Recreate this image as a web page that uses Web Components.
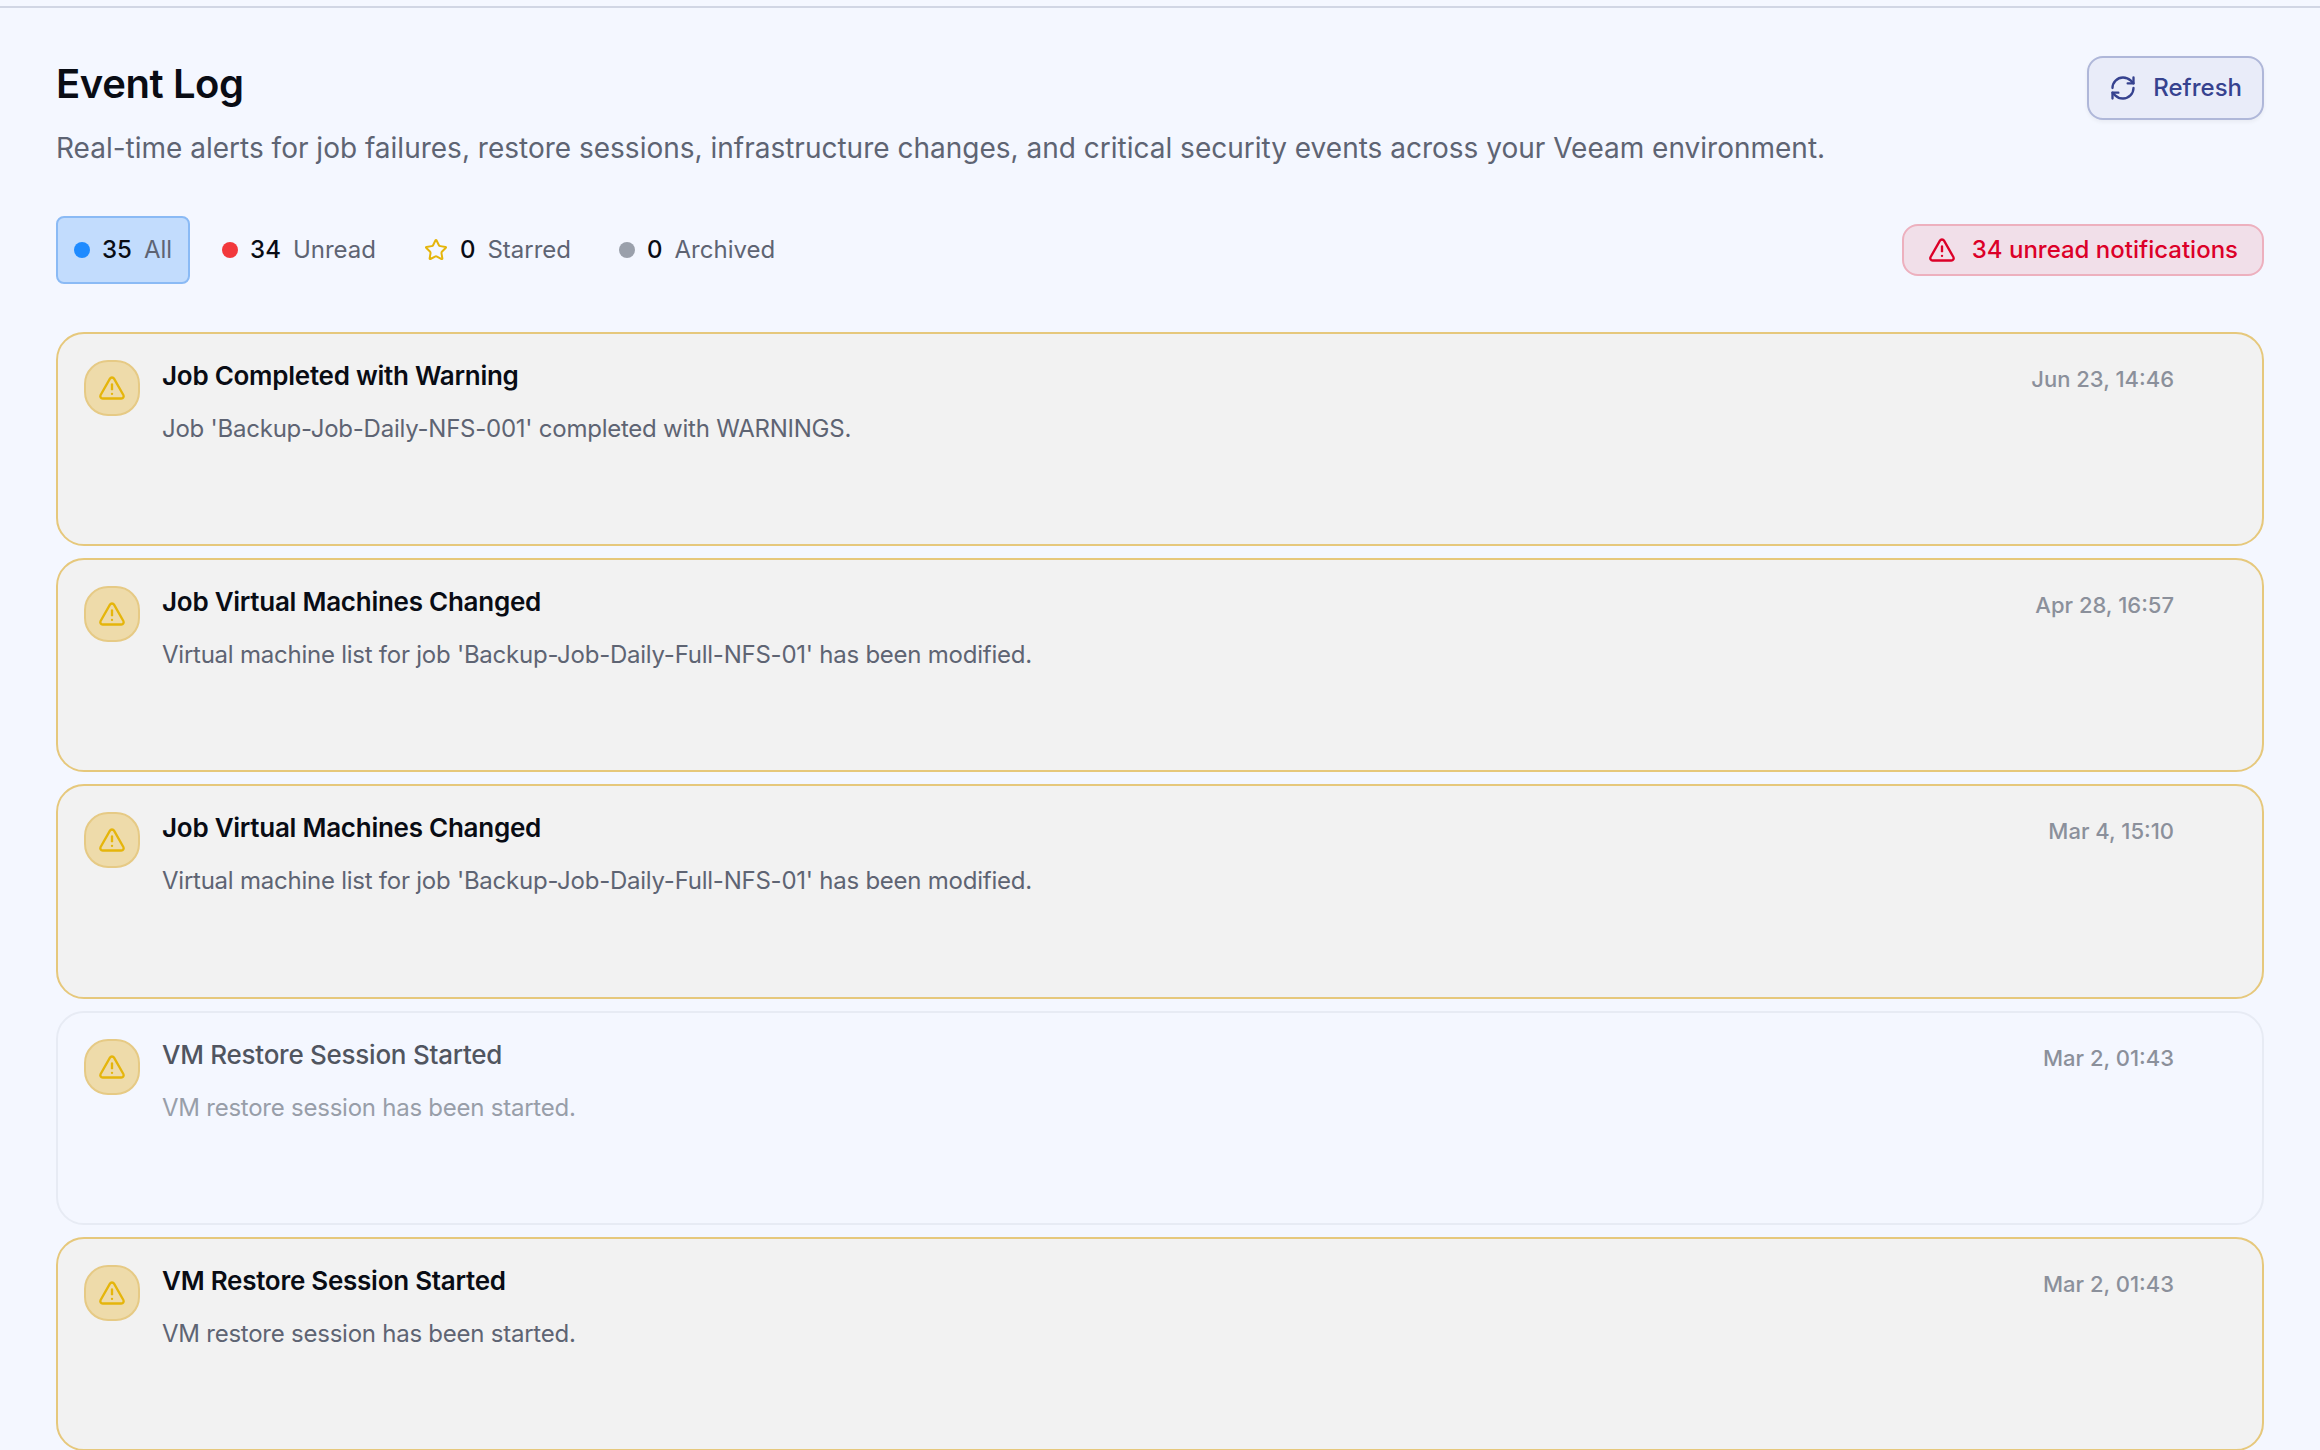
<!DOCTYPE html>
<html lang="en">
<head>
<meta charset="utf-8">
<title>Event Log</title>
<style>
html {
  background: #f4f7ff;
}

body {
  margin: 0;
  height: 1450px;
  overflow: hidden;
  font-family: Inter, "Liberation Sans", sans-serif;
  color: #090c14;
}
</style>
</head>
<body>

<event-log>
  <span slot="title">Event Log</span>
  <span slot="subtitle">Real-time alerts for job failures, restore sessions, infrastructure changes, and critical security events across your Veeam environment.</span>
  <refresh-button slot="action">Refresh</refresh-button>

  <filter-chip slot="filters" count="35" color="#1f8bff" active>All</filter-chip>
  <filter-chip slot="filters" count="34" color="#f2383c">Unread</filter-chip>
  <filter-chip slot="filters" count="0" icon="star" color="#e5b50b">Starred</filter-chip>
  <filter-chip slot="filters" count="0" color="#9aa0ab">Archived</filter-chip>
  <unread-badge slot="status">34 unread notifications</unread-badge>

  <event-card time="Jun 23, 14:46" unread>
    <span slot="title">Job Completed with Warning</span>
    Job 'Backup-Job-Daily-NFS-001' completed with WARNINGS.
  </event-card>
  <event-card time="Apr 28, 16:57" unread>
    <span slot="title">Job Virtual Machines Changed</span>
    Virtual machine list for job 'Backup-Job-Daily-Full-NFS-01' has been modified.
  </event-card>
  <event-card time="Mar 4, 15:10" unread>
    <span slot="title">Job Virtual Machines Changed</span>
    Virtual machine list for job 'Backup-Job-Daily-Full-NFS-01' has been modified.
  </event-card>
  <event-card time="Mar 2, 01:43">
    <span slot="title">VM Restore Session Started</span>
    VM restore session has been started.
  </event-card>
  <event-card time="Mar 2, 01:43" unread>
    <span slot="title">VM Restore Session Started</span>
    VM restore session has been started.
  </event-card>
</event-log>

<script>
const ICONS = {
  refresh: `
    <path d="M3 12a9 9 0 0 1 9-9 9.75 9.75 0 0 1 6.74 2.74L21 8" />
    <path d="M21 3v5h-5" />
    <path d="M21 12a9 9 0 0 1-9 9 9.75 9.75 0 0 1-6.74-2.74L3 16" />
    <path d="M8 16H3v5" />`,
  warning: `
    <path d="m21.73 18-8-14a2 2 0 0 0-3.48 0l-8 14A2 2 0 0 0 4 21h16a2 2 0 0 0 1.73-3" />
    <path d="M12 9v4" />
    <path d="M12 17h.01" />`,
  star: `
    <path d="M11.525 2.295a.53.53 0 0 1 .95 0l2.31 4.679a2.123 2.123 0 0 0 1.595 1.16l5.166.756a.53.53 0 0 1 .294.904l-3.736 3.638a2.123 2.123 0 0 0-.611 1.878l.882 5.14a.53.53 0 0 1-.771.56l-4.618-2.428a2.122 2.122 0 0 0-1.973 0L6.396 21.01a.53.53 0 0 1-.77-.56l.881-5.139a2.122 2.122 0 0 0-.611-1.879L2.16 9.795a.53.53 0 0 1 .294-.906l5.165-.755a2.122 2.122 0 0 0 1.597-1.16z" />`
};

class LineIcon extends HTMLElement {
  constructor() {
    super();
    var root = this.attachShadow({ mode: "open" });
    root.innerHTML = `
<style>
:host {
  display: block;
  flex: none;
  width: 28px;
  height: 28px;
}

svg {
  display: block;
  width: 100%;
  height: 100%;
  fill: none;
  stroke: currentColor;
  stroke-width: 2;
  stroke-linecap: round;
  stroke-linejoin: round;
}
</style>
<svg viewBox="0 0 24 24">${ICONS[this.getAttribute("name")]}</svg>
`;
  }
}

class RefreshButton extends HTMLElement {
  constructor() {
    super();
    var root = this.attachShadow({ mode: "open" });
    root.innerHTML = `
<style>
:host {
  display: block;
  flex: none;
}

button {
  display: flex;
  align-items: center;
  gap: 16px;
  box-sizing: border-box;
  height: 64px;
  padding: 0 20px;
  border: 2px solid #afb7d9;
  border-radius: 16px;
  background: #e9ecf9;
  box-shadow: 0 2px 4px rgb(0 0 0 / .05);
  color: #36428f;
  font: 500 24px/32px Inter, sans-serif;
}
</style>
<button>
  <line-icon name="refresh"></line-icon>
  <slot></slot>
</button>
`;
  }
}

class FilterChip extends HTMLElement {
  constructor() {
    super();
    var root = this.attachShadow({ mode: "open" });
    var icon = this.getAttribute("icon");
    var marker = icon ? `<line-icon name="${icon}"></line-icon>` : `<i></i>`;
    root.innerHTML = `
<style>
:host {
  display: flex;
  align-items: center;
  gap: 12px;
  padding: 16px;
  border-radius: 8px;
  font-size: 24px;
  line-height: 32px;
  color: #5e6473;
}

:host([active]) {
  border: 2px solid #8abaf5;
  background: #c2dcfd;
}

i {
  width: 16px;
  height: 16px;
  border-radius: 50%;
  background: ${this.getAttribute("color")};
}

line-icon {
  width: 24px;
  height: 24px;
  color: ${this.getAttribute("color")};
}

b {
  font-weight: 500;
  color: #090c14;
}
</style>
${marker}
<b>${this.getAttribute("count")}</b>
<slot></slot>
`;
  }
}

class UnreadBadge extends HTMLElement {
  constructor() {
    super();
    var root = this.attachShadow({ mode: "open" });
    root.innerHTML = `
<style>
:host {
  display: flex;
  align-items: center;
  gap: 16px;
  padding: 8px 24px;
  border: 2px solid #edb0be;
  border-radius: 16px;
  background: #f1dfe9;
  color: #dc0028;
  font-size: 24px;
  font-weight: 500;
  line-height: 32px;
}
</style>
<line-icon name="warning"></line-icon>
<slot></slot>
`;
  }
}

class EventCard extends HTMLElement {
  constructor() {
    super();
    var root = this.attachShadow({ mode: "open" });
    root.innerHTML = `
<style>
:host {
  display: flex;
  align-items: flex-start;
  gap: 22px;
  box-sizing: border-box;
  height: 214.2px;
  padding: 26px 88px 26px 26px;
  border: 2px solid #e7ebf4;
  border-radius: 28px;
}

:host([unread]) {
  border-color: #e6c87c;
  background: #f2f2f2;
}

.severity {
  display: grid;
  place-items: center;
  flex: none;
  box-sizing: border-box;
  width: 56px;
  height: 56px;
  border: 2px solid #e6ca85;
  border-radius: 24px;
  background: #eedbaa;
  color: #e5b50b;
}

.body {
  flex: 1;
  letter-spacing: -.01em;
}

h2 {
  margin: 0;
  font-size: 26px;
  font-weight: 500;
  line-height: 32px;
  letter-spacing: -.01em;
  color: #505560;
}

p {
  margin: 20px 0 0;
  font-size: 24px;
  line-height: 34px;
  letter-spacing: -.01em;
  color: #989ea9;
}

:host([unread]) h2 {
  font-weight: 600;
  color: #090c14;
}

:host([unread]) p {
  color: #5e6473;
}

time {
  margin-top: 3px;
  font-size: 22px;
  font-weight: 500;
  line-height: 32px;
  color: #8b909b;
}
</style>
<div class="severity"><line-icon name="warning"></line-icon></div>
<div class="body">
  <h2><slot name="title"></slot></h2>
  <p><slot></slot></p>
</div>
<time>${this.getAttribute("time")}</time>
`;
  }
}

class EventLog extends HTMLElement {
  constructor() {
    super();
    var root = this.attachShadow({ mode: "open" });
    root.innerHTML = `
<style>
:host {
  display: block;
  margin-top: 6px;
  padding: 48px 56px 0;
  border-top: 2px solid #d1d6e4;
}

header, nav, .filters {
  display: flex;
}

header {
  justify-content: space-between;
  align-items: flex-start;
}

h1 {
  margin: 0;
  font-size: 40px;
  font-weight: 600;
  line-height: 56px;
  letter-spacing: -.01em;
}

header p {
  margin: 16px 0 0;
  font-size: 28px;
  line-height: 40px;
  color: #5e6473;
}

nav {
  justify-content: space-between;
  align-items: center;
  margin: 48px 0;
}

.filters {
  gap: 16px;
}

main {
  display: grid;
  gap: 12px;
}
</style>
<header>
  <div>
    <h1><slot name="title"></slot></h1>
    <p><slot name="subtitle"></slot></p>
  </div>
  <slot name="action"></slot>
</header>
<nav>
  <div class="filters"><slot name="filters"></slot></div>
  <slot name="status"></slot>
</nav>
<main><slot></slot></main>
`;
  }
}

window.customElements.define("line-icon", LineIcon);
window.customElements.define("refresh-button", RefreshButton);
window.customElements.define("filter-chip", FilterChip);
window.customElements.define("unread-badge", UnreadBadge);
window.customElements.define("event-card", EventCard);
window.customElements.define("event-log", EventLog);
</script>
</body>
</html>
